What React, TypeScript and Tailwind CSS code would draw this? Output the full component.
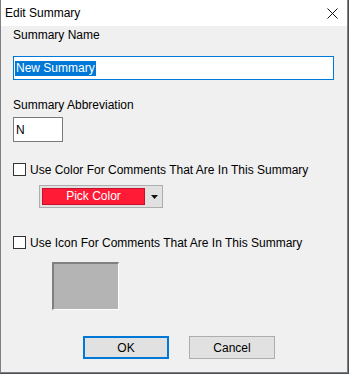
import React from "react";

export default function App() {
  const font = { fontFamily: '"Liberation Sans", Arial, sans-serif' };
  return (
    <div className="w-[349px] h-[374px] bg-[#4a4f55]" style={font}>
      <div className="w-[348px] h-[373px] border-l border-r border-b border-[#7f7f7f] bg-[#f0f0f0] flex flex-col text-black">
        <div className="h-[26px] bg-white flex items-center justify-between pl-[4px] pr-[9px] shrink-0">
          <span className="text-[12px] leading-[14px]">Edit Summary</span>
          <svg width="11" height="11" viewBox="0 0 11 11" className="mt-[1px]">
            <path d="M0.5 0.5 L10.5 10.5 M10.5 0.5 L0.5 10.5" stroke="#111" strokeWidth="1" fill="none" />
          </svg>
        </div>
        <div className="flex flex-col pl-[12px] pr-[13px]">
          <div className="mt-[2px] h-[14px] text-[12px] leading-[14px]">Summary Name</div>
          <div className="mt-[14px] h-[24px] w-[321px] border border-[#0078d7] bg-white flex items-center pl-[1px]">
            <span className="bg-[#0078d7] text-white text-[12px] leading-[15px] h-[15px] pl-[1px] pr-[1px]">New Summary</span>
          </div>
          <div className="mt-[18px] h-[14px] text-[12px] leading-[14px]">Summary Abbreviation</div>
          <div className="mt-[5px] h-[25px] w-[50px] border border-[#7a7a7a] bg-white flex items-center pl-[2px] text-[12px]">N</div>
          <div className="mt-[21px] h-[13px] flex items-center">
            <div className="w-[13px] h-[13px] border border-[#333] bg-white shrink-0" />
            <span className="ml-[4px] text-[12px] leading-[14px]">Use Color For Comments That Are In This Summary</span>
          </div>
          <div className="mt-[9px] ml-[26px] w-[124px] h-[23px] border border-[#adadad] bg-[#e1e1e1] flex items-center pl-[2px]">
            <div className="w-[103px] h-[17px] bg-[#ff1a35] border border-[#c8102a] text-white text-[12px] leading-[15px] text-center">Pick Color</div>
            <svg width="7" height="4" viewBox="0 0 7 4" className="ml-[6px]">
              <path d="M0 0 H7 L3.5 4 Z" fill="#111" />
            </svg>
          </div>
          <div className="mt-[28px] h-[13px] flex items-center">
            <div className="w-[13px] h-[13px] border border-[#333] bg-white shrink-0" />
            <span className="ml-[4px] text-[12px] leading-[14px]">Use Icon For Comments That Are In This Summary</span>
          </div>
          <div className="mt-[13px] ml-[39px] w-[67px] h-[48px] bg-[#b4b4b4] border-t-2 border-l-2 border-r border-b border-t-[#808080] border-l-[#808080] border-r-white border-b-white" />
          <div className="mt-[26px] flex">
            <div className="ml-[70px] w-[86px] h-[23px] border-2 border-[#0078d7] bg-[#e1e1e1] flex items-center justify-center text-[12px]">OK</div>
            <div className="ml-[20px] w-[86px] h-[23px] border border-[#adadad] bg-[#e1e1e1] flex items-center justify-center text-[12px]">Cancel</div>
          </div>
        </div>
      </div>
    </div>
  );
}
